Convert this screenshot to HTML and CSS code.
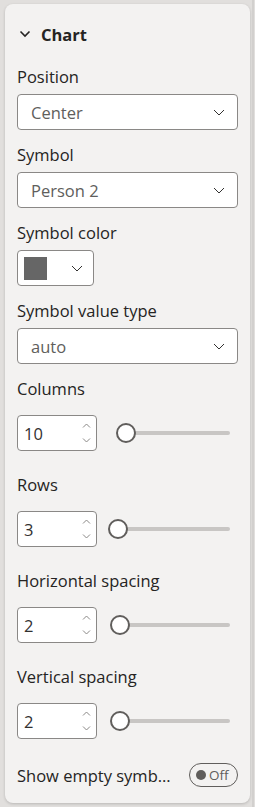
FILE: index.html
```html
<!DOCTYPE html>
<html lang="en">
<head>
  <meta charset="UTF-8" />
  <title>Format - Chart</title>
  <link rel="stylesheet" href="styles.css">
</head>
<body>

  <div class="pane">
    <section class="card">

      <div class="card-header">
        <svg class="caret" width="12" height="8" viewBox="0 0 12 8"><path d="M1.5 1.5 L6 6 L10.5 1.5" fill="none" stroke="#252423" stroke-width="1.6"/></svg>
        <span>Chart</span>
      </div>

      <div class="field">
        <label>Position</label>
        <div class="dropdown">
          <span>Center</span>
          <svg class="chev" width="12" height="7" viewBox="0 0 12 7"><path d="M1 1 L6 6 L11 1" fill="none" stroke="#323130" stroke-width="1"/></svg>
        </div>
      </div>

      <div class="field">
        <label>Symbol</label>
        <div class="dropdown">
          <span>Person 2</span>
          <svg class="chev" width="12" height="7" viewBox="0 0 12 7"><path d="M1 1 L6 6 L11 1" fill="none" stroke="#323130" stroke-width="1"/></svg>
        </div>
      </div>

      <div class="field">
        <label>Symbol color</label>
        <div class="color-btn">
          <span class="swatch"></span>
          <svg class="chev" width="12" height="7" viewBox="0 0 12 7"><path d="M1 1 L6 6 L11 1" fill="none" stroke="#323130" stroke-width="1"/></svg>
        </div>
      </div>

      <div class="field">
        <label>Symbol value type</label>
        <div class="dropdown">
          <span>auto</span>
          <svg class="chev" width="12" height="7" viewBox="0 0 12 7"><path d="M1 1 L6 6 L11 1" fill="none" stroke="#323130" stroke-width="1"/></svg>
        </div>
      </div>

      <div class="field field-slider">
        <label>Columns</label>
        <div class="slider-row">
          <div class="spin">
            <span>10</span>
            <div class="spin-arrows">
              <svg width="9" height="5" viewBox="0 0 9 5"><path d="M1 4.5 L4.5 1 L8 4.5" fill="none" stroke="#8a8886" stroke-width="1"/></svg>
              <svg width="9" height="5" viewBox="0 0 9 5"><path d="M1 0.5 L4.5 4 L8 0.5" fill="none" stroke="#8a8886" stroke-width="1"/></svg>
            </div>
          </div>
          <div class="slider">
            <div class="track"></div>
            <div class="thumb" style="left: 8px"></div>
          </div>
        </div>
      </div>

      <div class="field field-slider">
        <label>Rows</label>
        <div class="slider-row">
          <div class="spin">
            <span>3</span>
            <div class="spin-arrows">
              <svg width="9" height="5" viewBox="0 0 9 5"><path d="M1 4.5 L4.5 1 L8 4.5" fill="none" stroke="#8a8886" stroke-width="1"/></svg>
              <svg width="9" height="5" viewBox="0 0 9 5"><path d="M1 0.5 L4.5 4 L8 0.5" fill="none" stroke="#8a8886" stroke-width="1"/></svg>
            </div>
          </div>
          <div class="slider">
            <div class="track"></div>
            <div class="thumb" style="left: 0px"></div>
          </div>
        </div>
      </div>

      <div class="field field-slider">
        <label>Horizontal spacing</label>
        <div class="slider-row">
          <div class="spin">
            <span>2</span>
            <div class="spin-arrows">
              <svg width="9" height="5" viewBox="0 0 9 5"><path d="M1 4.5 L4.5 1 L8 4.5" fill="none" stroke="#8a8886" stroke-width="1"/></svg>
              <svg width="9" height="5" viewBox="0 0 9 5"><path d="M1 0.5 L4.5 4 L8 0.5" fill="none" stroke="#8a8886" stroke-width="1"/></svg>
            </div>
          </div>
          <div class="slider">
            <div class="track"></div>
            <div class="thumb" style="left: 2px"></div>
          </div>
        </div>
      </div>

      <div class="field field-slider">
        <label>Vertical spacing</label>
        <div class="slider-row">
          <div class="spin">
            <span>2</span>
            <div class="spin-arrows">
              <svg width="9" height="5" viewBox="0 0 9 5"><path d="M1 4.5 L4.5 1 L8 4.5" fill="none" stroke="#8a8886" stroke-width="1"/></svg>
              <svg width="9" height="5" viewBox="0 0 9 5"><path d="M1 0.5 L4.5 4 L8 0.5" fill="none" stroke="#8a8886" stroke-width="1"/></svg>
            </div>
          </div>
          <div class="slider">
            <div class="track"></div>
            <div class="thumb" style="left: 2px"></div>
          </div>
        </div>
      </div>

      <div class="toggle-row">
        <span class="toggle-label">Show empty symbols</span>
        <div class="toggle">
          <span class="dot"></span>
          <span>Off</span>
        </div>
      </div>

    </section>
    <div class="scrollbar"></div>
  </div>

</body>
</html>
```

FILE: styles.css
```css
body {
  margin: 0;
  background: #e1dfdd;
  font-family: "Open Sans", "Noto Sans", sans-serif;
  color: #252423;
}

.pane {
  display: flex;
  height: 807px;
}

.card {
  width: 245px;
  height: 799px;
  box-sizing: border-box;
  margin: 4px 0 0 5px;
  padding: 20px 12px 0 12px;
  background: #f3f2f1;
  border-radius: 8px;
  box-shadow: 0 1px 3px rgba(0,0,0,0.18);
}

.scrollbar {
  width: 2px;
  margin-left: 2px;
  background: #d2d0ce;
}

.card-header {
  display: flex;
  align-items: center;
  height: 20px;
  font-size: 16.5px;
  font-weight: 700;
}

.caret {
  margin: 0 10px 0 2px;
}

.field {
  margin-top: 23px;
}

.field + .field {
  margin-top: 15px;
}

.field label {
  display: block;
  height: 20px;
  line-height: 20px;
  font-size: 16.5px;
  margin-bottom: 7px;
  white-space: nowrap;
}

.dropdown {
  display: flex;
  align-items: center;
  justify-content: space-between;
  height: 36px;
  box-sizing: border-box;
  padding: 0 12px 0 13px;
  background: #fff;
  border: 1px solid #8a8886;
  border-radius: 4px;
  font-size: 16.5px;
  color: #605e5c;
}

.color-btn {
  display: flex;
  align-items: center;
  justify-content: space-between;
  width: 77px;
  height: 36px;
  box-sizing: border-box;
  padding: 0 10px 0 6px;
  background: #fff;
  border: 1px solid #8a8886;
  border-radius: 4px;
}

.swatch {
  width: 23px;
  height: 23px;
  background: #666666;
}

.field-slider label {
  margin-bottom: 16px;
}

.field + .field-slider {
  margin-top: 15px;
}

.field-slider + .field-slider {
  margin-top: 24px;
}

.slider-row {
  display: flex;
  align-items: center;
}

.spin {
  display: flex;
  align-items: center;
  justify-content: space-between;
  width: 80px;
  height: 36px;
  box-sizing: border-box;
  padding: 0 5px 0 6px;
  background: #fff;
  border: 1px solid #8a8886;
  border-radius: 4px;
  font-size: 16.5px;
  color: #323130;
}

.spin-arrows {
  display: flex;
  flex-direction: column;
  gap: 10px;
}

.spin-arrows svg {
  display: block;
}

.slider {
  position: relative;
  width: 122px;
  height: 20px;
  margin-left: 11px;
}

.track {
  position: absolute;
  left: 10px;
  right: 0;
  top: 8px;
  height: 4px;
  border-radius: 2px;
  background: #c8c6c4;
}

.thumb {
  position: absolute;
  top: 0;
  width: 20px;
  height: 20px;
  box-sizing: border-box;
  border: 2px solid #605e5c;
  border-radius: 50%;
  background: #fff;
}

.toggle-row {
  display: flex;
  align-items: center;
  justify-content: space-between;
  margin-top: 24px;
  height: 24px;
}

.toggle-label {
  width: 162px;
  white-space: nowrap;
  overflow: hidden;
  text-overflow: ellipsis;
  font-size: 16.5px;
}

.toggle {
  display: flex;
  align-items: center;
  gap: 3px;
  width: 49px;
  height: 24px;
  box-sizing: border-box;
  padding-left: 6px;
  border: 1px solid #605e5c;
  border-radius: 12px;
  font-size: 13.5px;
  color: #605e5c;
}

.dot {
  width: 10px;
  height: 10px;
  border-radius: 50%;
  background: #605e5c;
}
```
